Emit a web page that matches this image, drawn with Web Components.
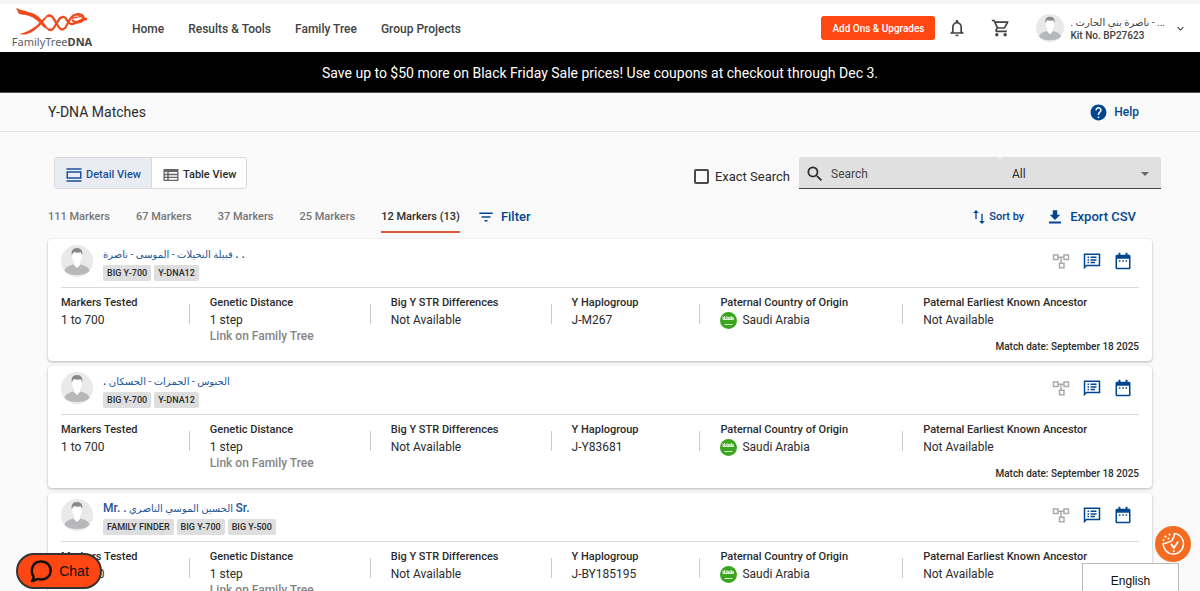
<!DOCTYPE html>
<html lang="en">
<head>
<meta charset="utf-8">
<meta name="viewport" content="width=device-width, initial-scale=1">
<title>Y-DNA Matches</title>
<style>
  :root {
    --blue: #00468f;
    --orange: #ff4713;
    --text: #2b2b2b;
    --muted: #757575;
    --line: #dadada;
    scrollbar-width: none;
  }
  body {
    margin: 0;
    background: #fafafa;
    color: var(--text);
    font-family: Roboto, "Liberation Sans", "DejaVu Sans", sans-serif;
    font-size: 12px;
    line-height: 16px;
  }
</style>
</head>
<body>
<match-page></match-page>

<script>
const icons = {
  bell: '<path d="M12 22c1.1 0 2-.9 2-2h-4c0 1.1.9 2 2 2zm6-6v-5c0-3.07-1.63-5.64-4.5-6.32V4c0-.83-.67-1.5-1.5-1.5s-1.5.67-1.5 1.5v.68C7.64 5.36 6 7.92 6 11v5l-2 2v1h16v-1l-2-2zm-2 1H8v-6c0-2.48 1.51-4.5 4-4.5s4 2.02 4 4.5v6z"/>',
  cart: '<path d="M15.55 13c.75 0 1.41-.41 1.75-1.03l3.58-6.49A.996.996 0 0 0 20.01 4H5.21l-.94-2H1v2h2l3.6 7.59-1.35 2.44C4.52 15.37 5.48 17 7 17h12v-2H7l1.1-2h7.45zM6.16 6h12.15l-2.76 5H8.53L6.16 6zM7 18c-1.1 0-1.99.9-1.99 2S5.9 22 7 22s2-.9 2-2-.9-2-2-2zm10 0c-1.1 0-1.99.9-1.99 2s.89 2 1.99 2 2-.9 2-2-.9-2-2-2z"/>',
  chevron: '<path d="M7.4 8.6 12 13.2l4.6-4.6L18 10l-6 6-6-6z"/>',
  help: '<path d="M12 2C6.48 2 2 6.48 2 12s4.48 10 10 10 10-4.48 10-10S17.52 2 12 2zm1 17h-2v-2h2v2zm2.07-7.75-.9.92C13.45 12.9 13 13.5 13 15h-2v-.5c0-1.1.45-2.1 1.17-2.83l1.24-1.26c.37-.36.59-.86.59-1.41 0-1.1-.9-2-2-2s-2 .9-2 2H8c0-2.21 1.79-4 4-4s4 1.79 4 4c0 .88-.36 1.68-.93 2.25z"/>',
  detail: '<path d="M2 3h20v2H2zM2 19h20v2H2zM2 7v10h20V7H2zm18 8H4V9h16v6z"/>',
  table: '<path d="M2 4v16h20V4H2zm5 14.3H3.8V16H7v2.3zm0-4H3.8v-2H7v2zm0-4H3.8V8H7v2.3zm13.2 8H9V16h11.2v2.3zm0-4H9v-2h11.2v2zm0-4H9V8h11.2v2.3z"/>',
  search: '<path d="M15.5 14h-.79l-.28-.27A6.47 6.47 0 0 0 16 9.5 6.5 6.5 0 1 0 9.5 16c1.61 0 3.09-.59 4.23-1.57l.27.28v.79l5 4.99L20.49 19l-4.99-5zm-6 0C7.01 14 5 11.99 5 9.5S7.01 5 9.5 5 14 7.01 14 9.5 11.99 14 9.5 14z"/>',
  filter: '<path d="M10 18h4v-2h-4v2zM3 6v2h18V6H3zm3 7h12v-2H6v2z"/>',
  sort: '<path d="M7.500 1.500 3.200 6h3.300v9h2V6h3.300zM15.500 7v11h-3.300l4.300 4.500 4.300-4.500h-3.300V7z"/>',
  download: '<path d="M19 9h-4V3H9v6H5l7 7 7-7zM4 18v2.500h16V18H4z"/>',
  tree: '<path d="M1 3v8h8V8h2v6H9v8h8v-8h-4V8h2v3h8V3h-8v3H9V3H1zm2 2h4v4H3zm14 0h4v4h-4zM11 16h4v4h-4z"/>',
  note: '<path d="M21 2H1v21l4-4h18V2h-2zm0 15H4.200L3 18.200V4h18v13zM6 13h2v2H6zm0-3.500h2v2H6zM6 6h2v2H6zm4 7h6v2h-6zm0-3.500h8v2h-8zM10 6h8v2h-8z"/>',
  calendar: '<path d="M20 3.500h-2V1h-2.500v2.500h-7V1H6v2.500H4c-1.100 0-2 .9-2 2V21c0 1.100.9 2 2 2h16c1.100 0 2-.9 2-2V5.500c0-1.100-.9-2-2-2zM20 21H4V9h16v12zM6.500 11h2v2h-2zm4.500 0h2v2h-2zm4.500 0h2v2h-2z"/>'
};

const matches = [
  {
    name: "قبيلة النحيلات - الموسى - ناصرة <b>. .</b>",
    tests: ["BIG Y-700", "Y-DNA12"],
    haplogroup: "J-M267"
  },
  {
    name: "<b>.</b> الحبوس - الحمزات - الحسكان",
    tests: ["BIG Y-700", "Y-DNA12"],
    haplogroup: "J-Y83681"
  },
  {
    name: "<b>Mr. .</b> الحسين الموسي الناصري <b>Sr.</b>",
    tests: ["FAMILY FINDER", "BIG Y-700", "BIG Y-500"],
    haplogroup: "J-BY185195"
  }
];

const reset = `
  * { box-sizing: border-box; }
  button, input, select { font: inherit; color: inherit; margin: 0; }
  button { border: 0; padding: 0; background: none; cursor: pointer; }
  a { color: inherit; text-decoration: none; }
`;

class BaseElement extends HTMLElement {
  connectedCallback() {
    if (this.shadowRoot) return;
    this.attachShadow({ mode: "open" });
    this.shadowRoot.innerHTML = `<style>${reset}${this.css()}</style>${this.html()}`;
  }
}

class UiIcon extends BaseElement {
  css() {
    return `
      :host { display: inline-flex; flex: none; }
      svg { width: var(--size, 18px); height: var(--size, 18px); fill: currentColor; }
    `;
  }
  html() {
    return `<svg viewBox="0 0 24 24" aria-hidden="true">${icons[this.getAttribute("name")]}</svg>`;
  }
}

class UserAvatar extends BaseElement {
  css() {
    return `
      :host { display: inline-flex; flex: none; width: var(--size, 32px); height: var(--size, 32px); }
      svg { width: 100%; height: 100%; }
    `;
  }
  html() {
    return `
      <svg viewBox="0 0 32 32" aria-hidden="true">
        <circle cx="16" cy="16" r="16" fill="#e9e9e9"/>
        <path d="M3.500 26c1-4.500 5-5 8.500-6.500h8c3.500 1.500 7.500 2 8.500 6.500-3 3-7.500 4-12.500 4s-9.500-1-12.500-4z" fill="#b7b8ba"/>
        <path d="M13 16h6v4l-3 3-3-3z" fill="#fff"/>
        <path d="M11 9.500c0-4 10-4 10 0 0 5-2.200 9.500-5 9.500s-5-4.500-5-9.500z" fill="#fff"/>
        <path d="M11 10.500c-1.300-4.500 1-7.500 5-7.500s6.300 3 5 7.500c-.2-1.600-.6-2.500-1.500-3.300-2 .7-4.500.5-6.500-.3-1 .8-1.700 1.900-2 3.600z" fill="#85888c"/>
      </svg>`;
  }
}

class SiteLogo extends BaseElement {
  css() {
    return `
      :host { display: block; width: 80px; }
      a { display: flex; flex-direction: column; align-items: center; color: #5b5f64; }
      svg { width: 74px; height: 27px; }
      span { font: 11px/14px "Noto Sans", sans-serif; white-space: nowrap; }
      b { color: #3f4449; }
    `;
  }
  html() {
    return `
      <a href="#">
        <svg viewBox="0 0 74 27" fill="none" stroke="#f2491c" aria-hidden="true">
          <path d="M1 0c8 4 17 3 24 10 4 4 6 9 10 12-6-1-9-6-13-9.500C16 7 9 7 4 6z" fill="#f2491c" stroke="none"/>
          <path d="M4 26c5-1 12-4 17-8 5-4 8-9.500 13-11.500-3 4-6 8-10 12-6 5.500-11 8.500-17 8z" fill="#f2491c" stroke="none"/>
          <path d="M33 21c4 3 6-1 8.500-5.500S46 8 49 9s3.500 6 7 7c4 1 8-5 16-5" stroke-width="2.300"/>
          <path d="M32 8.500c4-3 6 1 9.500 7s5.500 7.500 8.500 4.500 4-11 9.500-13S69 7 68.500 10.500 61 16 57 12" stroke-width="2.300"/>
          <path d="M57 11c2-3 7-1 9-2.500M62 7c3 0 4 3 9 4" stroke-width="1.200"/>
        </svg>
        <span>FamilyTree<b>DNA</b></span>
      </a>`;
  }
}

class SiteHeader extends BaseElement {
  css() {
    return `
      :host { display: block; border-top: 4px solid #f5f5f5; background: #fff; }
      header { display: flex; align-items: center; height: 48px; padding: 0 13px 0 12px; }
      nav { display: flex; gap: 24px; margin-left: 40px; padding-top: 2px; font-weight: 500; color: #424242; }
      .tools { display: flex; align-items: center; margin-left: auto; color: #424242; }
      .upgrade {
        height: 24px; padding: 2px 11px 0; margin-right: 12px; border-radius: 3px;
        background: var(--orange); color: #fff; font-size: 10px; font-weight: 500;
      }
      .tools > button:not(.upgrade) { display: flex; align-items: center; }
      .cart { margin: 0 25px 0 24px; }
      .bell, .cart { --size: 20px; }
      .account { gap: 6px; --size: 28px; text-align: left; }
      .account span { display: grid; padding-top: 2px; line-height: 13px; font-size: 10px; font-weight: 500; }
      bdi { font-size: 10px; font-weight: 400; }
      .account ui-icon { --size: 13px; margin-left: 3px; }
    `;
  }
  html() {
    return `
      <header>
        <site-logo></site-logo>
        <nav>
          <a href="#">Home</a>
          <a href="#">Results &amp; Tools</a>
          <a href="#">Family Tree</a>
          <a href="#">Group Projects</a>
        </nav>
        <div class="tools">
          <button class="upgrade">Add Ons &amp; Upgrades</button>
          <button class="bell" aria-label="Notifications"><ui-icon name="bell"></ui-icon></button>
          <button class="cart" aria-label="Cart"><ui-icon name="cart"></ui-icon></button>
          <button class="account">
            <user-avatar></user-avatar>
            <span><bdi dir="ltr">. ناصرة بني الحارث - ...</bdi>Kit No. BP27623</span>
            <ui-icon name="chevron"></ui-icon>
          </button>
        </div>
      </header>`;
  }
}

class PromoBar extends BaseElement {
  css() {
    return `
      :host {
        display: block; padding: 13px 12px 11px; border-bottom: 1px solid #555; background: #000;
        color: #fff; font-size: 14px; text-align: center;
      }
    `;
  }
  html() {
    return `<slot></slot>`;
  }
}

class PageTitle extends BaseElement {
  css() {
    return `
      :host {
        display: flex; align-items: center; justify-content: space-between;
        height: 39px; padding: 0 61px 0 48px; border-bottom: 1px solid #e4e4e4;
      }
      h1 { margin: 0; font-size: 14px; font-weight: 400; }
      a { display: flex; align-items: center; gap: 6px; color: var(--blue); font-weight: 500; --size: 19px; }
    `;
  }
  html() {
    return `<h1><slot></slot></h1><a href="#"><ui-icon name="help"></ui-icon>Help</a>`;
  }
}

class ViewToggle extends BaseElement {
  css() {
    return `
      :host { display: flex; height: 32px; border: 1px solid #d8dadd; border-radius: 3px; background: #fff; overflow: hidden; }
      button { display: flex; align-items: center; gap: 3px; padding: 3px 10px 0; font-size: 11px; font-weight: 500; }
      button + button { border-left: 1px solid #d8dadd; }
      [aria-pressed=true] { background: #e9edf3; color: #1a4f9c; }
      [aria-pressed=false] ui-icon { color: #666; }
    `;
  }
  html() {
    return `
      <button aria-pressed="true"><ui-icon name="detail"></ui-icon>Detail View</button>
      <button aria-pressed="false"><ui-icon name="table"></ui-icon>Table View</button>`;
  }
}

class MatchSearch extends BaseElement {
  css() {
    return `
      :host { display: flex; align-items: center; gap: 9px; }
      .exact { display: flex; align-items: center; gap: 6px; padding-top: 7px; font-size: 13px; }
      .exact input { appearance: none; width: 15px; height: 15px; border: 2px solid #4a4a4a; border-radius: 2px; }
      .box { display: flex; border-bottom: 1px solid #444; }
      .search, .scope { display: flex; align-items: center; height: 31px; padding-top: 2px; background: #e0e0e0; border-radius: 3px 3px 0 0; }
      .search { gap: 6px; width: 201px; padding-left: 6px; }
      .search ui-icon { --size: 20px; }
      .search input { width: 100%; min-width: 0; border: 0; padding: 0; background: none; }
      input::placeholder { color: #444; opacity: 1; }
      .scope { width: 161px; padding-left: 12px; padding-right: 12px; }
      select { appearance: none; flex: 1; border: 0; padding: 0; background: none; }
      .scope::after { content: ""; border: 4px solid transparent; border-top-color: #666; border-bottom: 0; }
    `;
  }
  html() {
    return `
      <label class="exact"><input type="checkbox">Exact Search</label>
      <div class="box">
        <label class="search"><ui-icon name="search"></ui-icon><input type="text" placeholder="Search" aria-label="Search"></label>
        <label class="scope"><select aria-label="Search in"><option>All</option></select></label>
      </div>`;
  }
}

class MarkerBar extends BaseElement {
  css() {
    return `
      :host { display: flex; align-items: center; color: var(--blue); font-weight: 500; }
      .tabs { display: flex; gap: 26px; color: var(--muted); font-size: 11px; }
      .tabs button { height: 33px; padding-top: 3px; border-bottom: 2px solid transparent; font-weight: 500; }
      .tabs [aria-selected=true] { color: var(--text); border-color: #e2583a; }
      .action { display: flex; align-items: center; gap: 6px; padding-top: 1px; font-size: 13px; font-weight: 500; }
      .filter { margin-left: 17px; }
      .sort { gap: 2px; margin-left: auto; font-size: 11px; --size: 16px; }
      .export { margin: 0 16px 0 22px; }
    `;
  }
  html() {
    const tabs = ["111 Markers", "67 Markers", "37 Markers", "25 Markers", "12 Markers (13)"];
    return `
      <div class="tabs" role="tablist">
        ${tabs.map((t, i) => `<button role="tab" aria-selected="${i === 4}">${t}</button>`).join("")}
      </div>
      <button class="action filter"><ui-icon name="filter"></ui-icon>Filter</button>
      <button class="action sort"><ui-icon name="sort"></ui-icon>Sort by</button>
      <button class="action export"><ui-icon name="download"></ui-icon>Export CSV</button>`;
  }
}

class MatchField extends BaseElement {
  css() {
    return `
      :host { display: flex; align-items: center; justify-content: space-between; min-width: 0; }
      :host(:not([last]))::after { content: ""; width: 1px; height: 20px; margin: 0 20px 11px 0; background: #ccc; }
      div { align-self: start; white-space: nowrap; }
      h3 { margin: 0 0 1px; font-size: 11px; font-weight: 500; line-height: 16px; }
    `;
  }
  html() {
    return `<div><h3>${this.getAttribute("label")}</h3><slot></slot></div>`;
  }
}

class MatchCard extends BaseElement {
  css() {
    return `
      :host {
        display: block; height: 122px; padding: 6px 13px 0; border-radius: 4px; background: #fff;
        box-shadow: 0 1px 3px rgba(0, 0, 0, .28);
      }
      .head { display: flex; gap: 10px; height: 43px; border-bottom: 1px solid var(--line); }
      .name { display: block; height: 20px; line-height: 19px; color: #1c5597; font-size: 10px; }
      .name b { font-size: 12px; font-weight: 500; }
      .tests { display: flex; gap: 3px; }
      .tests span {
        padding: 0 4px; border-radius: 2px; background: #dedede;
        font-size: 9px; font-weight: 500; line-height: 16px;
      }
      .actions { display: flex; gap: 13px; margin: 7px 7px 0 auto; align-self: start; color: var(--blue); }
      .actions button { display: flex; }
      .actions .tree { color: #aaa; }
      .fields { display: grid; grid-template-columns: 149fr 181fr 181fr 149fr 203fr 216fr; height: 51px; padding-top: 7px; }
      .link { display: block; color: #858585; font-weight: 500; }
      .country { display: flex; gap: 5px; }
      .flag { width: 17px; height: 17px; }
      .date { margin: 0; font-size: 10px; font-weight: 500; text-align: right; }
    `;
  }
  html() {
    const { name, tests, haplogroup } = this.match;
    return `
      <div class="head">
        <user-avatar></user-avatar>
        <div>
          <a class="name" href="#" dir="ltr">${name}</a>
          <div class="tests">${tests.map((t) => `<span>${t}</span>`).join("")}</div>
        </div>
        <div class="actions">
          <button class="tree" aria-label="Tree"><ui-icon name="tree"></ui-icon></button>
          <button aria-label="Notes"><ui-icon name="note"></ui-icon></button>
          <button aria-label="Timeline"><ui-icon name="calendar"></ui-icon></button>
        </div>
      </div>
      <div class="fields">
        <match-field label="Markers Tested">1 to 700</match-field>
        <match-field label="Genetic Distance">1 step<a class="link" href="#">Link on Family Tree</a></match-field>
        <match-field label="Big Y STR Differences">Not Available</match-field>
        <match-field label="Y Haplogroup">${haplogroup}</match-field>
        <match-field label="Paternal Country of Origin">
          <span class="country">
            <svg class="flag" viewBox="0 0 17 17" aria-hidden="true">
              <circle cx="8.500" cy="8.500" r="8.500" fill="#3ca51f"/>
              <path d="M3 4.500v3M4.500 4v3.500H6M7 4v3.500M8.500 5v2.500H10V4.500M11.500 4v3.500H13V5M3 6h11M3 7.500h11M4.500 12.500h8" stroke="#e4f4df" stroke-width=".9" fill="none"/>
            </svg>Saudi Arabia
          </span>
        </match-field>
        <match-field label="Paternal Earliest Known Ancestor" last>Not Available</match-field>
      </div>
      <p class="date">Match date: September 18 2025</p>`;
  }
}

class FloatingTools extends BaseElement {
  css() {
    return `
      :host { font-family: "Liberation Sans", Arial, sans-serif; }
      button { position: fixed; display: flex; align-items: center; justify-content: center; }
      .chat {
        left: 16px; bottom: 2px; width: 86px; height: 36px; gap: 6px;
        border: 2px solid #333; border-radius: 18px; background: var(--orange); color: #111; font-size: 14px;
      }
      .chat svg { width: 24px; height: 24px; }
      .cookie { right: 9px; bottom: 29px; width: 36px; height: 36px; border-radius: 50%; background: #f36c21; }
      .cookie svg { width: 28px; height: 28px; }
      .language { right: 21px; bottom: 0; width: 97px; height: 28px; padding-top: 7px; border: 1px solid #bbb; border-bottom: 0; background: #fff; color: #111; }
    `;
  }
  html() {
    return `
      <button class="chat">
        <svg viewBox="0 0 24 24" fill="none" stroke="#111" stroke-width="2.500" aria-hidden="true">
          <path d="M4.500 17.500C1 12 3 2.500 12 2.500c6 0 9.700 4 9.700 9s-3.700 9-9.700 9c-1.300 0-2.500-.1-3.500-.6-1.800 1.500-3.500 2-5.500 2 1.600-1.300 1.900-2.800 1.500-4.400z" stroke-linejoin="round"/>
        </svg>Chat
      </button>
      <button class="cookie" aria-label="Cookie settings">
        <svg viewBox="0 0 28 28" fill="none" stroke="#fff" stroke-width="1.500" stroke-linecap="round" stroke-linejoin="round" aria-hidden="true">
          <path d="M15.500 3.500c-.8 1.600.2 3-1 4.200-1.200 1-.8 2.400-2 3.300-1.300 1-2.800.3-4 1.500s-2.800.8-4.500 1c.3 6 4.500 10.500 10.300 10.500s10.200-4.600 10.200-10.200S20.500 3.700 15.500 3.500z"/>
          <path d="m12.500 14.500 2.300 3.500 4-6" stroke-width="1.900"/>
          <path d="M10.500 4.500v.1M6.500 6.500v.1M9.500 8.500v.1M4.500 10v.1M14.800 21v.1" stroke-width="2.200"/>
        </svg>
      </button>
      <button class="language">English</button>`;
  }
}

class MatchPage extends BaseElement {
  css() {
    return `
      :host { display: block; }
      main { padding: 25px 48px 16px; }
      .controls { display: flex; justify-content: space-between; margin: 0 -9px 0 6px; }
      marker-bar { margin: 11px 0 6px; }
      .list { display: grid; gap: 5px; }
    `;
  }
  html() {
    return `
      <site-header></site-header>
      <promo-bar>Save up to $50 more on Black Friday Sale prices! Use coupons at checkout through Dec 3.</promo-bar>
      <page-title>Y-DNA Matches</page-title>
      <main>
        <div class="controls"><view-toggle></view-toggle><match-search></match-search></div>
        <marker-bar></marker-bar>
        <div class="list"></div>
      </main>
      <floating-tools></floating-tools>`;
  }
  connectedCallback() {
    super.connectedCallback();
    const list = this.shadowRoot.querySelector(".list");
    matches.forEach((match) => {
      const card = document.createElement("match-card");
      card.match = match;
      list.append(card);
    });
  }
}

customElements.define("ui-icon", UiIcon);
customElements.define("user-avatar", UserAvatar);
customElements.define("site-logo", SiteLogo);
customElements.define("site-header", SiteHeader);
customElements.define("promo-bar", PromoBar);
customElements.define("page-title", PageTitle);
customElements.define("view-toggle", ViewToggle);
customElements.define("match-search", MatchSearch);
customElements.define("marker-bar", MarkerBar);
customElements.define("match-field", MatchField);
customElements.define("match-card", MatchCard);
customElements.define("floating-tools", FloatingTools);
customElements.define("match-page", MatchPage);
</script>
</body>
</html>
